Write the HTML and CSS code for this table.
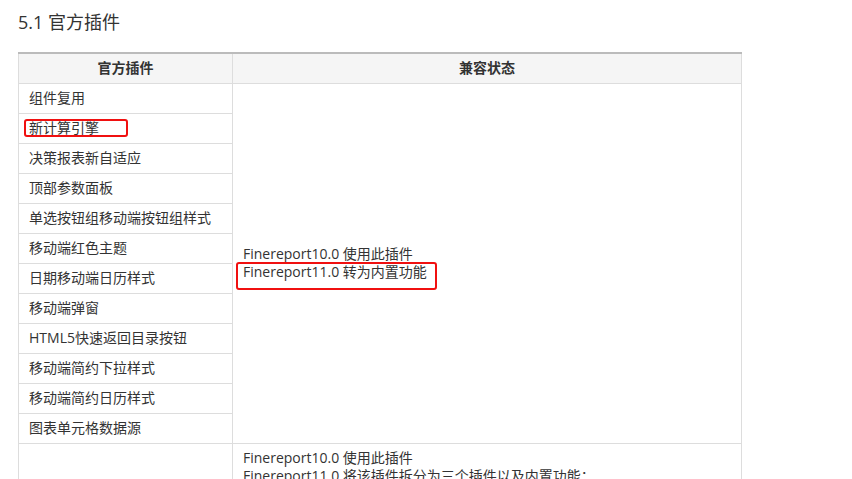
FILE: index.html
```html
<!DOCTYPE html>
<html lang="zh-CN">
<head>
  <meta charset="utf-8">
  <title>官方插件</title>
  <link rel="stylesheet" href="styles.css">
</head>
<body>
  <h2 class="section-title">5.1 官方插件</h2>

  <table class="plugin-table">
    <thead>
      <tr>
        <th class="col-name">官方插件</th>
        <th>兼容状态</th>
      </tr>
    </thead>
    <tbody>
      <tr>
        <td>组件复用</td>
        <td rowspan="12" class="status">
          <div>Finereport10.0 使用此插件</div>
          <div class="marked">Finereport11.0 转为内置功能<span class="mark mark-wide"></span></div>
        </td>
      </tr>
      <tr><td class="has-mark">新计算引擎<span class="mark mark-cell"></span></td></tr>
      <tr><td>决策报表新自适应</td></tr>
      <tr><td>顶部参数面板</td></tr>
      <tr><td>单选按钮组移动端按钮组样式</td></tr>
      <tr><td>移动端红色主题</td></tr>
      <tr><td>日期移动端日历样式</td></tr>
      <tr><td>移动端弹窗</td></tr>
      <tr><td>HTML5快速返回目录按钮</td></tr>
      <tr><td>移动端简约下拉样式</td></tr>
      <tr><td>移动端简约日历样式</td></tr>
      <tr><td>图表单元格数据源</td></tr>
      <tr>
        <td></td>
        <td class="status top">
          <div>Finereport10.0 使用此插件</div>
          <div>Finereport11.0 将该插件拆分为三个插件以及内置功能：</div>
        </td>
      </tr>
    </tbody>
  </table>
</body>
</html>
```

FILE: styles.css
```css
body {
  margin: 0;
  padding: 0 18px;
  font-family: "Open Sans", "Noto Sans CJK SC", sans-serif;
  color: #333;
  background-color: #fff;
}

.section-title {
  margin: 10px 0 18px;
  font-size: 18px;
  font-weight: normal;
  line-height: 24px;
  color: #333;
}

.plugin-table {
  width: 724px;
  border-collapse: collapse;
  font-size: 14px;
  line-height: 18px;
}

.plugin-table th,
.plugin-table td {
  border: 1px solid #ddd;
  padding: 5px 10px 6px;
  height: 18px;
}

.plugin-table th {
  background-color: #f5f5f5;
  border-top: 2px solid #bbb;
  font-weight: bold;
  text-align: center;
}

.col-name {
  width: 193px;
}

.status {
  vertical-align: middle;
}

.status.top {
  vertical-align: top;
}

.has-mark,
.marked {
  position: relative;
}

.mark {
  position: absolute;
  border: 2px solid #f01010;
  border-radius: 3px;
}

.mark-cell {
  left: 5px;
  top: 5px;
  width: 100px;
  height: 14px;
}

.mark-wide {
  left: -7px;
  top: -1px;
  width: 197px;
  height: 24px;
}
```
